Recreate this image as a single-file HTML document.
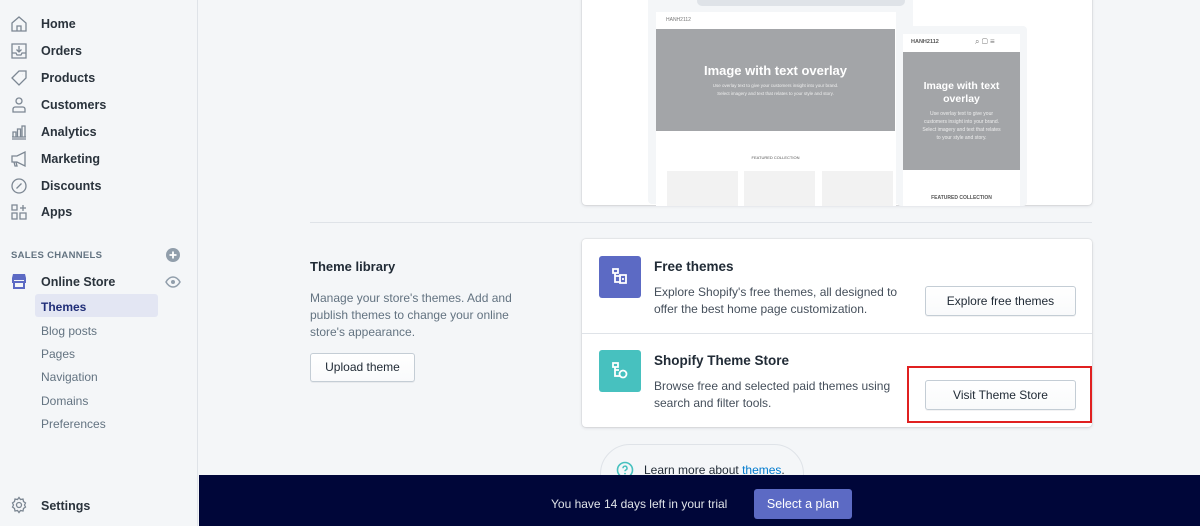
<!DOCTYPE html>
<html><head><meta charset="utf-8">
<style>
*{margin:0;padding:0;box-sizing:border-box}
body{width:1200px;height:526px;overflow:hidden;background:#f4f6f8;font-family:"Liberation Sans",sans-serif;color:#212b36;position:relative}
.sb{position:absolute;left:0;top:0;width:198px;height:526px;background:#f4f6f8;border-right:1px solid #dfe3e8}
.it{position:absolute;left:41px;font-size:12.5px;font-weight:bold;color:#2a333c}
.ic{position:absolute;left:10px;width:18px;height:18px}
.sub{position:absolute;left:41px;font-size:12px;color:#637381}
.abs{position:absolute}
.card{position:absolute;background:#fff;border-radius:4px;box-shadow:0 0 0 1px rgba(63,63,68,.06),0 1px 3px rgba(63,63,68,.15)}
.btn{position:absolute;background:linear-gradient(#fff,#f9fafb);border:1px solid #c4cdd5;border-radius:3px;box-shadow:0 1px 0 rgba(22,29,37,.05);font-size:12px;color:#212b36;text-align:center}
.gray{fill:none;stroke:#7c8793;stroke-width:1.3}
</style></head><body>
<div class="sb">
<svg class="ic" style="top:15px" viewBox="0 0 18 18"><path class="gray" d="M2 8L9 2l7 6v8H2z M7 16v-5h4v5"/></svg>
<div class="it" style="top:17px">Home</div>
<svg class="ic" style="top:42px" viewBox="0 0 18 18"><path class="gray" d="M2 2h14v14H2z M2 11h4l1 2h4l1-2h4 M9 4v6 M6.5 7.5L9 10l2.5-2.5"/></svg>
<div class="it" style="top:44px">Orders</div>
<svg class="ic" style="top:69px" viewBox="0 0 18 18"><path class="gray" d="M2 9L9 2h7v7l-7 7z M12.5 5.5h.1"/></svg>
<div class="it" style="top:71px">Products</div>
<svg class="ic" style="top:96px" viewBox="0 0 18 18"><circle class="gray" cx="9" cy="5" r="3"/><path class="gray" d="M3 16v-3c0-1 1-2 2-2h8c1 0 2 1 2 2v3z"/></svg>
<div class="it" style="top:98px">Customers</div>
<svg class="ic" style="top:123px" viewBox="0 0 18 18"><path class="gray" d="M2 16h14 M2 14h14 M3 14V9h3v5 M7.5 14V6h3v8 M12 14V3h3v11"/></svg>
<div class="it" style="top:125px">Analytics</div>
<svg class="ic" style="top:150px" viewBox="0 0 18 18"><path class="gray" d="M2 6h5l8-4v14l-8-4H2z M4 12l1 4h2l-1-4"/></svg>
<div class="it" style="top:152px">Marketing</div>
<svg class="ic" style="top:177px" viewBox="0 0 18 18"><circle class="gray" cx="9" cy="9" r="7"/><path class="gray" d="M6.5 11.5l5-5 M7 7h.1 M11 11h.1"/></svg>
<div class="it" style="top:179px">Discounts</div>
<svg class="ic" style="top:203px" viewBox="0 0 18 18"><path class="gray" d="M2 2h5v5H2z M2 10h5v6H2z M10 10h6v6h-6z M13 2v6 M10 5h6"/></svg>
<div class="it" style="top:205px">Apps</div>
<div class="abs" style="left:11px;top:250px;font-size:9.5px;font-weight:bold;color:#637381;letter-spacing:.3px">SALES CHANNELS</div>
<svg class="abs" style="left:166px;top:248px" width="14" height="14" viewBox="0 0 14 14"><circle cx="7" cy="7" r="7" fill="#919eab"/><path d="M7 3.5v7M3.5 7h7" stroke="#fff" stroke-width="1.8"/></svg>
<svg class="ic" style="top:272px" viewBox="0 0 18 18"><path d="M3 2h12l1 4H2z" fill="#5c6ac4"/><path d="M3 7h12v3H3z M4 10h10v6H4z" fill="none" stroke="#5c6ac4" stroke-width="2"/></svg>
<div class="it" style="top:275px">Online Store</div>
<svg class="abs" style="left:165px;top:276px" width="16" height="12" viewBox="0 0 16 12"><path d="M1 6c2-3.5 4.5-5 7-5s5 1.5 7 5c-2 3.5-4.5 5-7 5S3 9.5 1 6z" fill="none" stroke="#919eab" stroke-width="1.5"/><circle cx="8" cy="6" r="2" fill="#919eab"/></svg>
<div class="abs" style="left:35px;top:294px;width:123px;height:23px;background:#e3e6f3;border-radius:3px"></div>
<div class="sub" style="top:300px;color:#202e78;font-weight:bold">Themes</div>
<div class="sub" style="top:324px">Blog posts</div>
<div class="sub" style="top:347px">Pages</div>
<div class="sub" style="top:370px">Navigation</div>
<div class="sub" style="top:394px">Domains</div>
<div class="sub" style="top:417px">Preferences</div>
<svg class="ic" style="top:496px" viewBox="0 0 18 18"><circle class="gray" cx="9" cy="9" r="2.5"/><path class="gray" d="M9 1.5l1.5 2 2.5-.5.5 2.5 2 1.5-1 2 1 2-2 1.5-.5 2.5-2.5-.5L9 16.5l-1.5-2-2.5.5-.5-2.5-2-1.5 1-2-1-2 2-1.5.5-2.5 2.5.5z"/></svg>
<div class="it" style="top:499px">Settings</div>
</div>

<div class="card" style="left:582px;top:-6px;width:510px;height:211px"></div>
<div class="abs" style="left:648px;top:-6px;width:265px;height:210px;background:#f4f6f8;border-radius:4px"></div>
<div class="abs" style="left:697px;top:-4px;width:208px;height:10px;background:#dfe3e8;border-radius:5px"></div>
<div class="abs" style="left:656px;top:12px;width:240px;height:194px;background:#fff"></div>
<div class="abs" style="left:666px;top:17px;font-size:5px;color:#777">HANH2112</div>
<div class="abs" style="left:656px;top:29px;width:239px;height:102px;background:#a3a5a8"></div>
<div class="abs" style="left:656px;top:63px;width:239px;text-align:center;color:#fff;font-size:13px;font-weight:bold">Image with text overlay</div>
<div class="abs" style="left:656px;top:82px;width:239px;text-align:center;color:#eee;font-size:4.5px;line-height:8px">Use overlay text to give your customers insight into your brand.<br>Select imagery and text that relates to your style and story.</div>
<div class="abs" style="left:656px;top:155px;width:239px;text-align:center;color:#555;font-size:4px">FEATURED COLLECTION</div>
<div class="abs" style="left:667px;top:171px;width:71px;height:35px;background:#f2f2f2"></div>
<div class="abs" style="left:744px;top:171px;width:71px;height:35px;background:#f2f2f2"></div>
<div class="abs" style="left:822px;top:171px;width:71px;height:35px;background:#f2f2f2"></div>
<div class="abs" style="left:897px;top:26px;width:130px;height:180px;background:#f4f6f8;border-radius:4px"></div>
<div class="abs" style="left:903px;top:34px;width:117px;height:172px;background:#fff"></div>
<div class="abs" style="left:911px;top:39px;font-size:5.5px;color:#555;font-weight:bold">HANH2112</div>
<div class="abs" style="left:975px;top:37px;font-size:8px;color:#777">⌕ ▢ ≡</div>
<div class="abs" style="left:903px;top:52px;width:117px;height:118px;background:#a3a5a8"></div>
<div class="abs" style="left:903px;top:80px;width:117px;text-align:center;color:#fff;font-size:10.5px;line-height:13px;font-weight:bold">Image with text<br>overlay</div>
<div class="abs" style="left:903px;top:110px;width:117px;text-align:center;color:#eee;font-size:5px;line-height:8px">Use overlay text to give your<br>customers insight into your brand.<br>Select imagery and text that relates<br>to your style and story.</div>
<div class="abs" style="left:903px;top:195px;width:117px;text-align:center;color:#555;font-size:5px;font-weight:bold">FEATURED COLLECTION</div>

<div class="abs" style="left:310px;top:222px;width:782px;height:1px;background:#dfe3e8"></div>

<div class="abs" style="left:310px;top:259px;font-size:13px;font-weight:bold">Theme library</div>
<div class="abs" style="left:310px;top:290px;width:220px;font-size:12px;line-height:17px;color:#637381">Manage your store's themes. Add and publish themes to change your online store's appearance.</div>
<div class="btn" style="left:310px;top:353px;width:105px;height:29px;line-height:27px;font-size:12px">Upload theme</div>

<div class="card" style="left:582px;top:239px;width:510px;height:188px"></div>
<div class="abs" style="left:582px;top:333px;width:510px;height:1px;background:#dfe3e8"></div>
<div class="abs" style="left:599px;top:256px;width:42px;height:42px;background:#5c6ac4;border-radius:3px"></div>
<svg class="abs" style="left:609px;top:266px" width="22" height="22" viewBox="0 0 22 22"><path d="M4 3h5v4H4z M6 7v9h6 M6 10h6 M11 9h6v8h-6z M13 13h2" fill="none" stroke="#fff" stroke-width="1.8"/></svg>
<div class="abs" style="left:599px;top:350px;width:42px;height:42px;background:#47c1bf;border-radius:3px"></div>
<svg class="abs" style="left:609px;top:360px" width="22" height="22" viewBox="0 0 22 22"><path d="M4 3h5v4H4z M6 7v9h5 M6 10h4" fill="none" stroke="#fff" stroke-width="1.8"/><circle cx="14" cy="14" r="3.5" fill="none" stroke="#fff" stroke-width="1.8"/></svg>
<div class="abs" style="left:654px;top:259px;font-size:13.5px;font-weight:bold">Free themes</div>
<div class="abs" style="left:654px;top:284px;width:260px;font-size:12px;line-height:17px;color:#454f5b">Explore Shopify's free themes, all designed to offer the best home page customization.</div>
<div class="btn" style="left:925px;top:286px;width:151px;height:30px;line-height:28px">Explore free themes</div>
<div class="abs" style="left:654px;top:353px;font-size:13.5px;font-weight:bold">Shopify Theme Store</div>
<div class="abs" style="left:654px;top:378px;width:260px;font-size:12px;line-height:17px;color:#454f5b">Browse free and selected paid themes using search and filter tools.</div>
<div class="btn" style="left:925px;top:380px;width:151px;height:30px;line-height:28px">Visit Theme Store</div>
<div class="abs" style="left:907px;top:366px;width:185px;height:57px;border:2px solid #e02020"></div>

<div class="abs" style="left:600px;top:444px;width:204px;height:60px;border:1px solid #dfe3e8;border-radius:30px"></div>
<svg class="abs" style="left:616px;top:461px" width="18" height="18" viewBox="0 0 18 18"><circle cx="9" cy="9" r="7.5" fill="none" stroke="#47c1bf" stroke-width="1.6"/><path d="M7 7.2a2 2 0 1 1 2.8 1.8c-.6.3-.8.7-.8 1.3" fill="none" stroke="#47c1bf" stroke-width="1.5"/><circle cx="9" cy="12.6" r=".9" fill="#47c1bf"/></svg>
<div class="abs" style="left:644px;top:463px;font-size:12px;color:#212b36">Learn more about <span style="color:#007ace">themes</span>.</div>

<div class="abs" style="left:199px;top:475px;width:1001px;height:51px;background:#000639"></div>
<div class="abs" style="left:551px;top:497px;font-size:12px;color:#dfe3e8">You have 14 days left in your trial</div>
<div class="abs" style="left:754px;top:489px;width:98px;height:30px;background:#5c6ac4;border-radius:3px;color:#fff;font-size:12.5px;text-align:center;line-height:30px">Select a plan</div>
</body></html>
